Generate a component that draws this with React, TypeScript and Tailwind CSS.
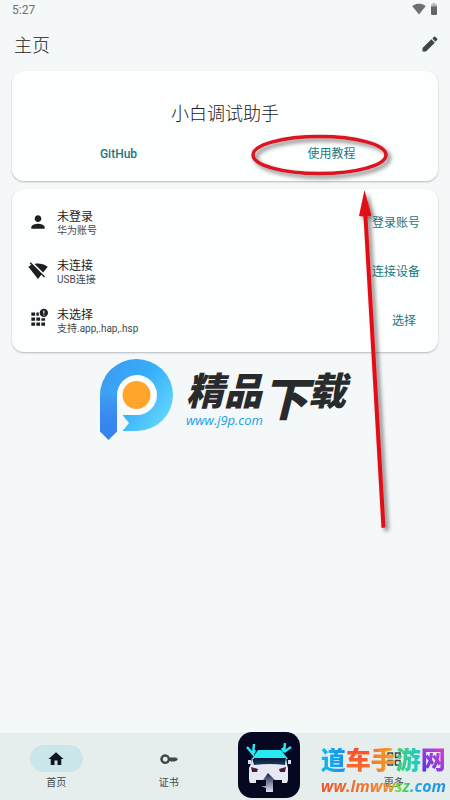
import { useState, type ReactNode } from 'react';

interface DeviceRow {
  title: string;
  subtitle: string;
  action: string;
  icon: ReactNode;
}

/** 24x24 filled glyph in the Material style */
function Glyph({ d, className = 'size-5' }: { d: string; className?: string }) {
  return (
    <svg className={className} viewBox="0 0 24 24" fill="currentColor" aria-hidden="true">
      <path d={d} />
    </svg>
  );
}

const PENCIL =
  'M3 16.8V21h4.2L17.81 10.4l-4.2-4.2L3 16.8zM20.71 7.04a1 1 0 0 0 0-1.41l-2.34-2.34a1 1 0 0 0-1.41 0l-2.2 2.2 3.75 3.75 2.2-2.2z';
const PERSON =
  'M12 12c2.21 0 4-1.79 4-4s-1.79-4-4-4-4 1.79-4 4 1.79 4 4 4zm0 2c-2.67 0-8 1.34-8 4v2h16v-2c0-2.66-5.33-4-8-4z';
const WIFI_OFF =
  'M23.64 7c-.45-.34-4.93-4-11.64-4-1.5 0-2.89.19-4.15.48L18.18 13.8 23.64 7zm-6.6 8.22L3.27 1.44 2 2.72l2.05 2.06C1.91 5.76.59 6.82.36 7l11.63 14.49.01.01.01-.01 3.9-4.86 3.32 3.32 1.27-1.27-3.46-3.46z';
const WIFI = 'M12.01 21.49 23.64 7c-.45-.34-4.93-4-11.64-4C5.28 3 .81 6.66.36 7l11.63 14.49.01.01.01-.01z';
const HOME = 'M10 20v-6h4v6h5v-8h3L12 3 2 12h3v8z';
const KEY =
  'M12.900 10A6.500 6.500 0 1 0 12.900 14.500H14l1.500 1.500 1.500-1.500 1.500 1.500L20 14.500h1.500L24 12.200 21.500 10zM7 15.500a3.300 3.300 0 1 1 0-6.600 3.300 3.300 0 0 1 0 6.600z';
const WIDGETS =
  'M3 3h8v8H3V3zm2 2v4h4V5H5zm8-2h8v8h-8V3zm2 2v4h4V5h-4zM3 13h8v8H3v-8zm2 2v4h4v-4H5zm8-2h8v8h-8v-8zm2 2v4h4v-4h-4z';

/** App grid with an exclamation badge over the top right cell */
function AppsAlert() {
  return (
    <svg className="size-5 overflow-visible" viewBox="0 3 24 24" fill="currentColor" aria-hidden="true">
      <path d="M4 6h4.500v4H4zM10 6h3v4h-3zM4 12h4.500v4H4zM10 12h4.500v4H10zM16 13h4.500v3H16zM4 18h4.500v4H4zM10 18h4.500v4H10zM16 18h4.500v4H16z" />
      <path
        fillRule="evenodd"
        d="M19 1.500a5 5 0 1 1 0 10 5 5 0 0 1 0-10zm-.7 2v3.800h1.400V3.500zm0 4.800v1.400h1.400V8.300z"
      />
    </svg>
  );
}

const ROWS: DeviceRow[] = [
  { title: '未登录', subtitle: '华为账号', action: '登录账号', icon: <Glyph d={PERSON} /> },
  { title: '未连接', subtitle: 'USB连接', action: '连接设备', icon: <Glyph d={WIFI_OFF} /> },
  { title: '未选择', subtitle: '支持.app,.hap,.hsp', action: '选择', icon: <AppsAlert /> },
];

const TABS = [
  { label: '首页', icon: HOME },
  { label: '证书', icon: KEY },
  { label: '', icon: '' },
  { label: '更多', icon: WIDGETS },
];

function StatusBar() {
  return (
    <div className="flex h-5 items-center justify-between px-3 text-xs text-[#6c7072]">
      <span>5:27</span>
      <span className="flex items-center gap-1 pb-0.5">
        <Glyph d={WIFI} className="size-3.5" />
        <svg className="h-3 w-2" viewBox="0 0 8 12" aria-hidden="true">
          <path d="M2.5 0h3v1.5H7V4H1V1.5h1.5z" fill="#b4b8ba" />
          <path d="M1 3.5h6V11a1 1 0 0 1-1 1H2a1 1 0 0 1-1-1z" fill="#626668" />
        </svg>
      </span>
    </div>
  );
}

/** Hand-drawn ellipse and arrow pointing at the tutorial link */
function TutorialMarker() {
  return (
    <svg
      className="pointer-events-none absolute top-32 right-0 h-[416px] w-[210px]"
      viewBox="240 128 210 416"
      aria-hidden="true"
    >
      <defs>
        <filter id="marker-shadow" x="-20%" y="-20%" width="150%" height="150%">
          <feDropShadow dx="3" dy="3" stdDeviation="2" floodColor="#000" floodOpacity="0.5" />
        </filter>
      </defs>
      <g filter="url(#marker-shadow)">
        <ellipse cx="319.500" cy="155" rx="66.500" ry="18.500" fill="none" stroke="#da1220" strokeWidth="3.5" />
        <path
          d="M364.500 190L371.500 215.500L367.500 216.500L385.500 527.500L381.500 528L363.500 216.500L359 216Z"
          fill="#e30b18"
        />
      </g>
    </svg>
  );
}

function DownloadBrand() {
  return (
    <div className="flex items-start gap-3 pt-1.5 pl-[99px]">
      <svg className="h-[83px] w-[75px] shrink-0" viewBox="0 0 75 83" aria-hidden="true">
        <defs>
          <linearGradient id="brand-loop" x1="0" y1="0.2" x2="1" y2="0.9">
            <stop offset="0" stopColor="#3e9af2" />
            <stop offset="0.45" stopColor="#36aef8" />
            <stop offset="1" stopColor="#6adcff" />
          </linearGradient>
          <linearGradient id="brand-stem" x1="0" y1="0" x2="0" y2="1">
            <stop offset="0" stopColor="#3c9df3" />
            <stop offset="0.5" stopColor="#3a88ef" />
            <stop offset="1" stopColor="#3183ee" />
          </linearGradient>
        </defs>
        <circle cx="38" cy="37" r="20.500" fill="#fbfdfe" />
        <path
          d="M1 37.500A36.500 36 0 1 1 37.500 73H23.500L30 65L23.500 57H38A20 20 0 1 0 18 37.500Z"
          fill="url(#brand-loop)"
        />
        <path d="M1 37H18V73.500L9.500 82L1 73.500Z" fill="url(#brand-stem)" />
        <circle cx="37.500" cy="37" r="14" fill="#ffa52b" />
      </svg>
      <div className="flex flex-col pt-3 italic">
        <div className="flex h-[42px] items-start text-[38px] leading-[44px] font-black text-[#292a2c]">
          <span>精品</span>
          <span className="text-[46px] leading-[60px]">下</span>
          <span>载</span>
        </div>
        <a href="#j9p" className="font-['Open_Sans',sans-serif] text-[13px] leading-4 text-[#209fe3]">
          www.j9p.com
        </a>
      </div>
    </div>
  );
}

/** Rounded tile with the front of a car being lifted */
function CarTile() {
  return (
    <svg className="h-[66px] w-16 shrink-0" viewBox="0 0 64 66" aria-hidden="true">
      <defs>
        <linearGradient id="car-arrow" x1="0" y1="0" x2="0" y2="1">
          <stop offset="0" stopColor="#171a42" />
          <stop offset="1" stopColor="#dfe3f8" />
        </linearGradient>
        <linearGradient id="car-glass" x1="0" y1="0" x2="0" y2="1">
          <stop offset="0" stopColor="#0b1434" />
          <stop offset="1" stopColor="#1c4772" />
        </linearGradient>
      </defs>
      <rect x="1" y="0" width="62" height="66" rx="14" fill="#050820" />
      <path d="M15 27L21 18H44L51 27Z" fill="#25eaf1" />
      <path d="M17 26H49V35H17z" fill="url(#car-glass)" />
      <path
        d="M15 25L14 32L12 36V48L13 51H19V48H45V51H50L51 48V36L50 32L49 25L48 33Q33 31 17 33Z"
        fill="#e6e8f3"
      />
      <path d="M11 28h3v4h-3zM51 28h3v4h-3z" fill="#dadfed" />
      <path d="M14 35L21 37L20 40H15ZM49 35L42 37L43 40H48Z" fill="#4a1c34" />
      <path d="M31 41L38 48H36V60H29V56L24 54H29V48H26Z" fill="url(#car-arrow)" />
      <path
        d="M10 15L16 22L17 12M16 22L18 18M47 20L48 11M47 20L54 15M47 20L45 16"
        fill="none"
        stroke="#25eaf1"
        strokeWidth="2.500"
      />
    </svg>
  );
}

function GameBrand() {
  return (
    <div className="flex flex-col">
      <div className="flex text-[25px] leading-[26px] font-black">
        <span className="bg-linear-to-r from-[#12b9ea] to-[#1c8df0] bg-clip-text text-transparent">道</span>
        <span className="bg-linear-to-b from-[#fb4a2d] to-[#ef742d] bg-clip-text text-transparent">车</span>
        <span className="bg-linear-to-r from-[#f4742a] to-[#f7a522] bg-clip-text text-transparent">手</span>
        <span className="bg-linear-to-r from-[#43cd6b] to-[#1bc9d0] bg-clip-text text-transparent">游</span>
        <span className="bg-linear-to-bl from-[#e334ce] to-[#4524e9] bg-clip-text text-transparent">网</span>
      </div>
      <a
        href="#lmwwsz"
        className="bg-[linear-gradient(90deg,#ed5330_0%,#f3702b_35%,#f68a2b_54%,#7ddc3a_60%,#4ccf5c_68%,#2aa5e0_74%,#2590e5_100%)] bg-clip-text font-['Open_Sans',sans-serif] text-base leading-6 font-bold text-transparent italic"
      >
        ww.lmwwsz.com
      </a>
    </div>
  );
}

export default function App() {
  const [tab, setTab] = useState('首页');

  return (
    <div className="relative flex min-h-screen flex-col bg-[#f4f8f9] font-[Roboto,'Noto_Sans_CJK_SC',sans-serif] text-[#1c2022]">
      <StatusBar />
      <header className="flex h-[51px] items-center justify-between pr-2.5 pl-3.5">
        <h1 className="text-lg font-light">主页</h1>
        <button aria-label="编辑" className="pb-1 text-[#3e4648]">
          <Glyph d={PENCIL} />
        </button>
      </header>

      <main className="flex flex-1 flex-col">
        <section className="mx-3 rounded-xl bg-[#fdfefe] pt-7 pb-3.5 shadow-[0_1px_2px_rgba(0,0,0,0.25)]">
          <h2 className="text-center text-lg leading-[30px] font-light">小白调试助手</h2>
          <div className="mt-3 grid grid-cols-2 text-xs leading-[26px] text-[#1b7780]">
            <a href="#github" className="text-center font-medium">
              GitHub
            </a>
            <a href="#tutorial" className="text-center">
              使用教程
            </a>
          </div>
        </section>

        <section className="mx-3 mt-2 rounded-xl bg-[#fdfefe] py-2 pr-[18px] pl-4 shadow-[0_1px_2px_rgba(0,0,0,0.25)]">
          {ROWS.map((row) => (
            <div key={row.title} className="flex h-[49px] items-center gap-[9px]">
              {row.icon}
              <div className="flex flex-1 flex-col pt-0.5">
                <span className="text-xs leading-4">{row.title}</span>
                <span className="text-[10px] leading-3 text-[#45494b]">{row.subtitle}</span>
              </div>
              <button className="min-w-8 pt-0.5 text-center text-xs text-[#1b7780]">{row.action}</button>
            </div>
          ))}
        </section>

        <DownloadBrand />
      </main>

      <nav className="grid h-[67px] grid-cols-4 bg-[#e6eeed]">
        {TABS.map(({ label, icon }) =>
          label ? (
            <button
              key={label}
              onClick={() => setTab(label)}
              className="flex flex-col items-center gap-[3px] pt-3 text-[#41484a]"
            >
              <span
                className={
                  tab === label
                    ? 'flex h-[27px] w-[53px] items-center justify-center rounded-full bg-[#cae6eb] text-[#09191d]'
                    : 'flex h-[27px] w-[53px] items-center justify-center'
                }
              >
                <Glyph d={icon} className="size-[18px]" />
              </span>
              <span className="text-[10px] leading-4">{label}</span>
            </button>
          ) : (
            <span key="empty" />
          ),
        )}
      </nav>

      <TutorialMarker />
      <div className="pointer-events-none absolute right-1 bottom-0.5 flex items-end gap-5">
        <CarTile />
        <GameBrand />
      </div>
    </div>
  );
}
